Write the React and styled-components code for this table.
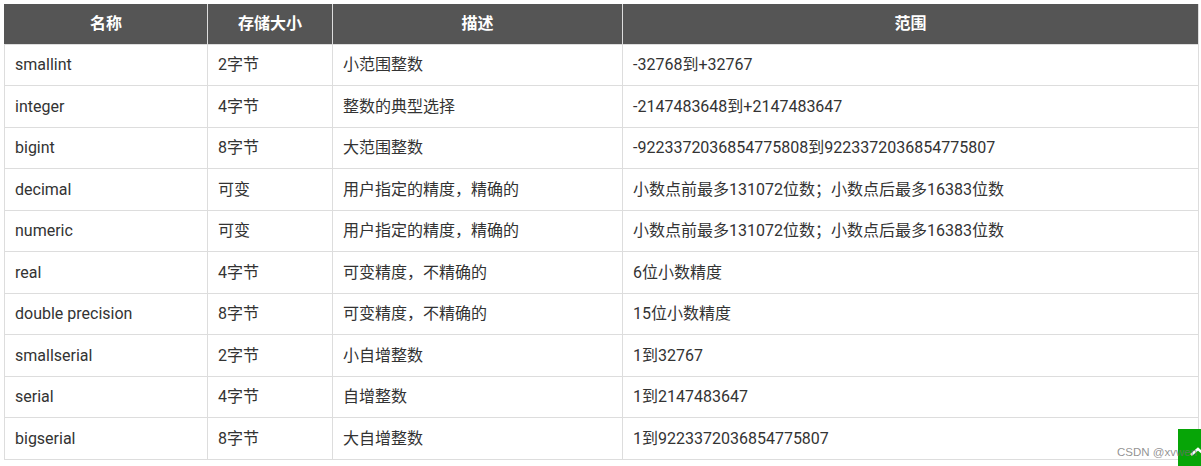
import styled, { createGlobalStyle } from 'styled-components';

const GlobalStyle = createGlobalStyle`
  body {
    margin: 0;
    background: #fff;
    font-family: Roboto, "Noto Sans CJK SC", sans-serif;
  }
`;

const Page = styled.div`
  padding: 4px 3px 0 4px;
  position: relative;
  height: 466px;
  box-sizing: border-box;
  overflow: hidden;
`;

const Table = styled.table`
  width: 1194px;
  border-collapse: collapse;
  table-layout: fixed;
  font-size: 16px;
  color: #333;
`;

const HeadCell = styled.th`
  background: #555;
  color: #fff;
  font-weight: bold;
  text-align: center;
  height: 40px;
  padding: 0 10px;
  border: 1px solid #ddd;
  border-top: none;
  line-height: 20px;
  box-sizing: border-box;
  &:first-child { border-left-color: #555; }
`;

const Cell = styled.td`
  padding: 10.5px 10px 9.5px;
  line-height: 20.5px;
  border: 1px solid #ddd;
  text-align: left;
  white-space: nowrap;
`;

const TopButton = styled.div`
  position: absolute;
  left: 1178px;
  top: 429px;
  width: 40px;
  height: 37px;
  background: #07a507;
  display: flex;
  justify-content: center;
  align-items: flex-start;
  padding-top: 18px;
  box-sizing: border-box;
`;

const Watermark = styled.span`
  position: absolute;
  left: 1117px;
  top: 446px;
  z-index: 2;
  font-family: "Liberation Sans", Arial, sans-serif;
  font-size: 11.5px;
  color: rgba(110, 110, 110, 0.75);
  white-space: nowrap;
`;

const columns = [
  { title: '名称', width: 203 },
  { title: '存储大小', width: 125 },
  { title: '描述', width: 290 },
  { title: '范围', width: 576 },
];

const rows = [
  ['smallint', '2字节', '小范围整数', '-32768到+32767'],
  ['integer', '4字节', '整数的典型选择', '-2147483648到+2147483647'],
  ['bigint', '8字节', '大范围整数', '-9223372036854775808到9223372036854775807'],
  ['decimal', '可变', '用户指定的精度，精确的', '小数点前最多131072位数；小数点后最多16383位数'],
  ['numeric', '可变', '用户指定的精度，精确的', '小数点前最多131072位数；小数点后最多16383位数'],
  ['real', '4字节', '可变精度，不精确的', '6位小数精度'],
  ['double precision', '8字节', '可变精度，不精确的', '15位小数精度'],
  ['smallserial', '2字节', '小自增整数', '1到32767'],
  ['serial', '4字节', '自增整数', '1到2147483647'],
  ['bigserial', '8字节', '大自增整数', '1到9223372036854775807'],
];

const App = () => {
  return (
    <Page>
      <GlobalStyle />
      <Table>
        <colgroup>
          {columns.map((c) => (
            <col key={c.title} style={{ width: c.width }} />
          ))}
        </colgroup>
        <thead>
          <tr>
            {columns.map((c) => (
              <HeadCell key={c.title}>{c.title}</HeadCell>
            ))}
          </tr>
        </thead>
        <tbody>
          {rows.map((r) => (
            <tr key={r[0]}>
              {r.map((v, i) => (
                <Cell key={i}>{v}</Cell>
              ))}
            </tr>
          ))}
        </tbody>
      </Table>
      <TopButton>
        <svg width="18" height="10" viewBox="0 0 18 10">
          <path d="M2 8 L9 2 L16 8" stroke="#fff" strokeWidth="2.5" fill="none" />
        </svg>
      </TopButton>
      <Watermark>CSDN @xvwen</Watermark>
    </Page>
  );
};

export default App;
